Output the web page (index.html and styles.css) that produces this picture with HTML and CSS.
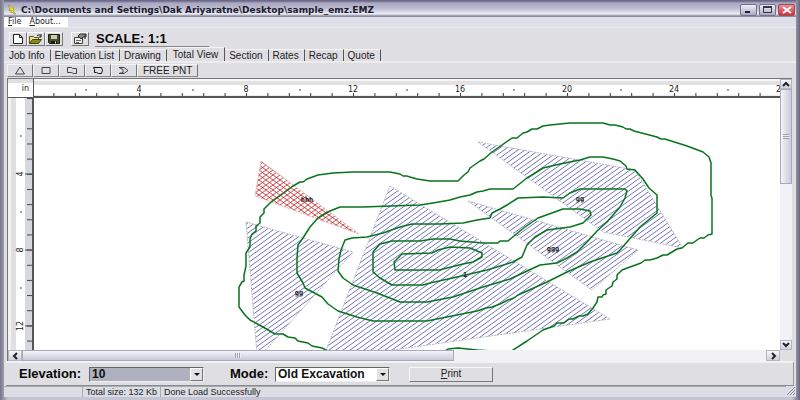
FILE: index.html
```html
<!DOCTYPE html>
<html lang="en">
<head>
<meta charset="utf-8">
<title>C:\Documents and Settings\Dak Ariyaratne\Desktop\sample_emz.EMZ</title>
<link rel="stylesheet" href="styles.css">
</head>
<body>
<div class="window">
  <header class="titlebar">
    <svg class="app-icon" width="10" height="10" viewBox="0 0 10 10" aria-hidden="true">
      <path d="M1 0L4 1L7 4L6 6L9 9L7 9L5 7L4 8L4 5L2 6L3 3Z" fill="#e6e01c" stroke="#8f8d22" stroke-width=".6"/>
    </svg>
    <h1 class="title">C:\Documents and Settings\Dak Ariyaratne\Desktop\sample_emz.EMZ</h1>
    <div class="window-controls">
      <button class="control" aria-label="Minimize"><svg width="14" height="10"><path d="M3 7h5" stroke="#223" stroke-width="2"/></svg></button>
      <button class="control" aria-label="Maximize"><svg width="14" height="10"><path d="M2.500 2.500h8v5h-8z" fill="none" stroke="#334"/><path d="M2 2h9" stroke="#334" stroke-width="2"/></svg></button>
      <button class="control close" aria-label="Close"><svg width="14" height="10"><path d="M3 2l8 6M11 2l-8 6" stroke="#fff" stroke-width="2"/></svg></button>
    </div>
  </header>

  <nav class="menubar">
    <button class="menu"><u>F</u>ile</button>
    <button class="menu"><u>A</u>bout...</button>
  </nav>

  <div class="toolbar">
    <button class="tool" aria-label="New"><svg width="16" height="12"><path d="M3.500 1.500h6l3 3v6h-9zM9.500 1.500v3h3" fill="#fff" stroke="#222"/></svg></button>
    <button class="tool" aria-label="Open"><svg width="16" height="12"><path d="M1.500 10.500v-7h4l1 1h4v2" fill="#e8e48a" stroke="#55551a"/><path d="M1.500 10.500l3-4h9l-3 4z" fill="#8a8a20" stroke="#44440c"/><path d="M9 2.500q3-2 4 1M13 1v3h-2" fill="none" stroke="#222"/></svg></button>
    <button class="tool" aria-label="Save"><svg width="16" height="12"><path d="M2.500 1.500h11v9h-10l-1-1z" fill="#4c5028" stroke="#1c1e12"/><path d="M5 2h6v4h-6z" fill="#c9cbb8"/><path d="M5 8h6v3h-6z" fill="#191919"/><path d="M9 8.500h1v2h-1z" fill="#ddd"/></svg></button>
    <button class="tool tool-apart" aria-label="Properties"><svg width="16" height="12"><path d="M2.500 4.500h8v6h-8z" fill="#eee" stroke="#444"/><path d="M4 7.500h5M4 9.500h3" stroke="#666"/><path d="M6 3l2-2h6v3h-3l-2 2z" fill="#888" stroke="#333"/><path d="M13 1v5" stroke="#333"/></svg></button>
    <output class="scale">SCALE: 1:1</output>
  </div>

  <div class="tabs" role="tablist">
    <button class="tab" role="tab">Job Info</button>
    <button class="tab" role="tab">Elevation List</button>
    <button class="tab" role="tab">Drawing</button>
    <button class="tab selected" role="tab" aria-selected="true">Total View</button>
    <button class="tab" role="tab">Section</button>
    <button class="tab" role="tab">Rates</button>
    <button class="tab" role="tab">Recap</button>
    <button class="tab" role="tab">Quote</button>
  </div>

  <div class="shapes">
    <button class="shape" aria-label="Triangle"><svg width="12" height="9"><path d="M6 1l4.500 7h-9z"/></svg></button>
    <button class="shape" aria-label="Rectangle"><svg width="12" height="9"><path d="M2 1.500h8v6h-8z"/></svg></button>
    <button class="shape" aria-label="Quadrilateral"><svg width="12" height="9"><path d="M1.500 1.500h4l1 1h4v5h-3l-2-1h-4z"/></svg></button>
    <button class="shape" aria-label="Polygon"><svg class="strong" width="12" height="9"><path d="M1.500 1.500h8l1 3-1 3h-3l-2-1h-2v-3z"/></svg></button>
    <button class="shape" aria-label="Open polygon"><svg width="12" height="9"><path d="M1 1.500h5l4 3-4 3h-5l4-1v-3z"/></svg></button>
    <button class="shape">FREE PNT</button>
  </div>

  <main class="viewport">
    <div class="corner">in</div>
    <svg class="ruler-x" aria-hidden="true">
      <defs>
        <pattern id="tick-x" width="21.400" height="17" patternUnits="userSpaceOnUse" x="19.400"><path d="M.5 12v4" stroke="#333"/></pattern>
      </defs>
      <rect width="100%" height="17" fill="url(#tick-x)"/>
      <g class="ruler-text">
        <text x="105" y="11">4</text><text x="212" y="11">8</text><text x="319" y="11">12</text><text x="426" y="11">16</text><text x="533" y="11">20</text><text x="640" y="11">24</text><text x="747" y="11">28</text>
      </g>
      <path class="major" d="M105.500 12v5M212.500 12v5M319.500 12v5M426.500 12v5M533.500 12v5M640.500 12v5"/>
      <path class="dots" d="M51 9h2M158 9h2M265 9h2M372 9h2M479 9h2M586 9h2M693 9h2"/>
    </svg>
    <svg class="ruler-y" aria-hidden="true">
      <defs>
        <pattern id="tick-y" width="24" height="15.160" patternUnits="userSpaceOnUse"><path d="M19 .5h5" stroke="#444"/></pattern>
      </defs>
      <rect width="24" height="100%" fill="url(#tick-y)"/>
      <g class="ruler-text">
        <text transform="translate(15 76) rotate(-90)">4</text><text transform="translate(15 152) rotate(-90)">8</text><text transform="translate(15 228) rotate(-90)">12</text>
      </g>
      <path class="major" d="M17 76h7M17 152h7M17 228h7"/>
      <path class="dots" d="M12 38h2M12 114h2M12 190h2"/>
    </svg>

    <svg class="plot" role="img" aria-label="Site contours with excavation areas">
      <defs>
        <pattern id="hatch" width="7" height="5" patternUnits="userSpaceOnUse"><path d="M-1 5.714L8 -.714M-1 .714L1 -.714M6 5.714L8 4.286" stroke="#6464b4" stroke-width=".9"/></pattern>
        <pattern id="cross" width="7" height="5" patternUnits="userSpaceOnUse"><path d="M0 5L7 0M0 0L7 5" stroke="#cf2c32" stroke-width=".9"/></pattern>
      </defs>
      <g transform="translate(-34 -98)">
        <g class="area">
          <path d="M246 222L353 252L262 354L257 354Z"/>
          <path d="M390 186L610 319L372 353L325 353Z"/>
          <path d="M478 142L635 170L683 248L603 232Z"/>
          <path d="M468 201L638 250L592 290Z"/>
        </g>
        <path class="area-cut" d="M261 161L255 196L359 234Z"/>
        <g class="contour">
          <path d="M328 351L322 348L312 346L308 343L298 341L295 338L288 337L283 334L275 334L263 327L250 320L245 315L239 307V287L242 282L244 281V275L246 266V253L250 247V239L252 234L256 231V226L260 223V217L264 213V209L270 203L285 192L293 186L300 182L303 182L307 179L318 175L333 173L353 172H390L400 174L403 176H407L410 177L417 179L430 181H458L464 175L468 172L470 168L480 161L484 159L492 152L512 138H517L523 133L527 132L532 129H537L543 126L550 125L560 124L570 123H603L610 125H615L623 127L626 129H630L634 131L657 137L661 139H665L687 146L703 152L709 157L711 163V196L712 198V234L708 235L704 238H700L697 240L693 243H688L682 248L677 249L667 255H663L657 258L650 260H645L641 263L630 267L622 270L617 275V279L613 282L612 286L606 290V294L603 295L602 297H598L597 302L593 308L588 314L583 316H579L573 319H569L564 323H557L554 326L543 330L527 341L510 352"/>
          <path d="M492 351L477 350L458 348L448 349L445 351"/>
          <path d="M303 238L310 227L318 218L330 211L340 207H363L390 206L420 205L433 203L450 200L460 197L470 195L477 192L483 191L490 189H513L527 178L532 175L543 168L560 164L580 160L590 157H603L613 159L620 161L626 166L627 169L635 170L643 179L649 188L657 195V213L640 227L627 242L620 250L617 253L605 257L590 262L567 272L547 282L527 291L518 295L514 298L508 300L500 304L492 307L486 308L477 311L447 317L427 321H373L357 317L338 311L328 304L322 297L305 288L303 283L297 273V258L298 245Z"/>
          <path d="M345 240L352 238L367 237L383 233L400 227L412 224H440L463 223L477 220L490 218L492 213L500 209L507 205L518 198L543 197L563 198L570 193L580 189H625L627 191L625 198L620 207L607 222L597 231L587 242L577 252L567 258L557 263L540 265L525 272L510 279L483 287L453 297L427 302H400L377 293L353 285L343 278L338 271L339 259L341 250Z"/>
          <path d="M392 241L380 244L373 252V272L380 278L392 285H423L430 283L457 277L487 270L513 262L522 257L527 245L535 237L547 230L570 227L583 223L591 215L590 211L580 209H563L538 218L525 227L520 231L508 241H500L498 243H483L460 241L450 239H433L420 241Z"/>
          <path d="M402 254L394 262L395 270H440L443 269L463 264L473 262L482 257V253L470 248L450 247L438 250L432 253Z"/>
        </g>
        <g class="area-label">
          <text x="307" y="202">hhh</text>
          <text x="299" y="295">gg</text>
          <text x="580" y="201">gg</text>
          <text x="553" y="251">ggg</text>
          <text x="465" y="277">1</text>
        </g>
      </g>
    </svg>

    <div class="scroll-y">
      <button class="arrow" aria-label="Scroll up"><svg width="10" height="8"><path d="M2 6l3-3 3 3"/></svg></button>
      <div class="track"><div class="thumb"><i class="grip"></i></div></div>
      <button class="arrow" aria-label="Scroll down"><svg width="10" height="8"><path d="M2 2l3 3 3-3"/></svg></button>
    </div>
    <div class="scroll-x">
      <button class="arrow" aria-label="Scroll left"><svg width="12" height="8"><path d="M8 1l-3 3 3 3"/></svg></button>
      <div class="track"><div class="thumb"><i class="grip"></i></div></div>
      <button class="arrow" aria-label="Scroll right"><svg width="12" height="8"><path d="M5 1l3 3-3 3"/></svg></button>
    </div>
    <div class="scroll-corner"></div>
  </main>

  <form class="options">
    <label class="option-label" for="elevation">Elevation:</label>
    <span class="combo active"><select id="elevation"><option>10</option></select><i class="drop"></i></span>
    <label class="option-label mode-label" for="mode">Mode:</label>
    <span class="combo"><select id="mode"><option>Old Excavation</option></select><i class="drop"></i></span>
    <button class="print" type="button"><u>P</u>rint</button>
  </form>

  <footer class="status">
    <span class="cell"></span>
    <span class="cell">Total size: 132 Kb</span>
    <span class="cell">Done Load Successfully</span>
    <svg class="resize" width="10" height="10" aria-hidden="true"><path d="M1 9l8-8M4 9l5-5M7 9l2-2" stroke="#8c8c96"/></svg>
  </footer>
</div>
</body>
</html>
```
FILE: styles.css
```css
* {
  box-sizing: border-box;
}

body {
  margin: 0;
  font: 10px/12px "Liberation Sans", Arial, sans-serif;
  color: #222;
}

button {
  margin: 0;
  padding: 0;
  border: 0;
  background: none;
  font: inherit;
  color: inherit;
}

svg {
  display: block;
}

.window {
  display: flex;
  flex-direction: column;
  height: 100vh;
  overflow: hidden;
  background: #dfdee2;
  border: solid #77768a;
  border-width: 0 4px 3px;
  border-image: linear-gradient(90deg, #77768a, #c4c4d4 1%, #c4c4d4 99%, #66657a) 4;
}

/* Title bar */

.titlebar {
  display: flex;
  flex: none;
  align-items: center;
  height: 17px;
  padding: 2px 1px 0 3px;
  background: linear-gradient(#6c6986 0 1px, #a9a8c2 3px, #b9b9d0 8px, #ededf5 14px, #8c8ca4 16px);
}

.title {
  flex: 1;
  margin: 0 0 0 4px;
  font: bold 9px/12px "DejaVu Sans", Verdana, sans-serif;
  color: #1c1b2b;
}

.window-controls {
  display: flex;
  gap: 2px;
}

.control {
  display: grid;
  place-items: center;
  width: 17px;
  height: 12px;
  border: 1px solid #71718d;
  border-radius: 2px;
  background: linear-gradient(#f0f0f8, #a9a9c4);
}

.close {
  border-color: #a34a58;
  background: linear-gradient(#ee8c90, #c8363e);
}

/* Menu */

.menubar {
  display: flex;
  flex: none;
  height: 11px;
  border-bottom: 1px solid #e9e9ee;
  background: linear-gradient(90deg, #fff 64px, #dedfe9 64px);
}

.menu {
  padding: 0 4px;
  font: 8px/10px "DejaVu Sans", Tahoma, sans-serif;
}

/* Toolbar */

.toolbar {
  display: flex;
  flex: none;
  align-items: center;
  height: 20px;
  padding: 2px 5px 1px;
}

.tool {
  display: grid;
  place-items: center;
  width: 18px;
  height: 14px;
  border: 1px solid;
  border-color: #fafafa #777 #777 #fafafa;
}

.tool-apart {
  margin-left: 8px;
}

.scale {
  width: 114px;
  margin-left: 6px;
  padding-left: 1px;
  border-bottom: 1px solid #888;
  font: bold 13px/15px "Liberation Sans", Arial, sans-serif;
  color: #080808;
}

/* Tabs */

.tabs {
  display: flex;
  flex: none;
  align-items: flex-end;
  height: 15px;
  padding-left: 1px;
  border-bottom: 2px solid #ececee;
}

.tab {
  height: 12px;
  padding: 0 5px 0 4px;
  border-top: 1px solid #f4f4f4;
  border-right: 1px solid #555;
  line-height: 12px;
}

.tab.selected {
  height: 14px;
  padding: 0 6px;
}

/* Shape tools */

.shapes {
  display: flex;
  flex: none;
  height: 15px;
  padding: 1px 3px;
}

.shape {
  display: grid;
  place-items: center;
  width: 26px;
  border: 1px solid;
  border-color: #f4f4f4 #777 #888 #f4f4f4;
}

.shape:last-child {
  width: auto;
  padding: 0 5px;
}

.shape svg {
  fill: none;
  stroke: #444;
}

.shape .strong {
  stroke: #111;
}

/* Drawing area */

.viewport {
  display: grid;
  flex: 1;
  grid-template: 19px minmax(0, 1fr) 11px / 26px minmax(0, 1fr) 12px;
  min-height: 0;
  margin: 0 4px 0 3px;
  border: solid #77777b;
  border-width: 1px 0 0 1px;
  background: #fff;
}

.corner {
  padding: 4px 4px 0 0;
  border-right: 1px solid #555;
  border-bottom: 1px solid #555;
  background: linear-gradient(#e0e0e2 4px, #fff 4px);
  font: 8px/12px "DejaVu Sans", Verdana, sans-serif;
  text-align: right;
}

.ruler-x {
  width: 100%;
  height: 19px;
  border-top: 2px solid #f6f6f6;
  border-bottom: 2px solid #555;
  background: linear-gradient(#e2e2e4 4px, #fff 4px, #fff 14px, #ddd 15px);
}

.ruler-y {
  width: 26px;
  height: 100%;
  border-right: 2px solid #555;
  background: linear-gradient(90deg, #f3f3ee 3px, #dfdfe3 3px, #dfdfe3 8px, #fff 8px, #fff 17px, #d7d7e1 17px);
}

.ruler-text {
  font: 8px "DejaVu Sans", Verdana, sans-serif;
  text-anchor: middle;
  fill: #222;
}

.major,
.dots {
  stroke: #444;
}

.plot {
  width: 100%;
  height: 100%;
}

.area {
  fill: url(#hatch);
  stroke: #b8b8c4;
  stroke-width: 1;
  stroke-dasharray: 2 1;
}

.area-cut {
  fill: url(#cross);
  stroke: #dcb4b4;
  stroke-dasharray: 2 1;
}

.contour {
  fill: none;
  stroke: #08731c;
  stroke-width: 1.5px;
  stroke-linejoin: round;
}

.area-label {
  font: bold 7px "DejaVu Sans Mono", monospace;
  text-anchor: middle;
  fill: #222;
}

/* Scroll bars */

.scroll-y {
  display: flex;
  flex-direction: column;
  grid-area: 1 / 3 / 3 / 4;
}

.scroll-x {
  display: flex;
  grid-area: 3 / 1 / 4 / 3;
}

.arrow {
  display: grid;
  flex: none;
  place-items: center;
  width: 12px;
  height: 10px;
  border: 1px solid #b4b4c2;
  background: linear-gradient(#f8f8fc, #cfcfdd);
}

.scroll-x .arrow {
  width: 14px;
  height: 11px;
}

.arrow path {
  fill: none;
  stroke: #222;
  stroke-width: 2;
}

.track {
  flex: 1;
  background: #f1f1f6;
}

.thumb {
  display: grid;
  place-items: center;
  border: 1px solid #a9a9ba;
}

.scroll-y .thumb {
  height: 38%;
  background: linear-gradient(90deg, #f4f4fa, #c9c9da);
}

.scroll-x .thumb {
  width: 58%;
  height: 11px;
  background: linear-gradient(#f4f4fa, #c9c9da);
}

.grip {
  width: 6px;
  height: 5px;
  background: repeating-linear-gradient(90deg, #a0a0b4 0 1px, #eee 1px 2px);
}

.scroll-y .grip {
  background: repeating-linear-gradient(#a0a0b4 0 1px, #eee 1px 2px);
}

.scroll-corner {
  background: #dfdee2;
}

/* Options */

.options {
  display: flex;
  flex: none;
  align-items: center;
  height: 25px;
  margin: 0 2px;
  padding-left: 13px;
  border: solid;
  border-width: 2px 1px 1px 0;
  border-color: #f2f2f2 #999 #8a8a8a;
}

.option-label {
  width: 70px;
  font: bold 13px/14px "Liberation Sans", Arial, sans-serif;
  color: #080808;
}

.mode-label {
  width: 45px;
  margin-left: 26px;
}

.combo {
  display: grid;
  grid-template-columns: 1fr 13px;
  width: 115px;
  height: 15px;
  border: 1px solid;
  border-color: #666 #eee #eee #666;
  background: #fff;
}

.combo.active {
  background: #aeb0be;
}

.combo select {
  grid-area: 1 / 1 / 2 / 3;
  width: 100%;
  height: 13px;
  padding: 0 14px 0 2px;
  border: 0;
  appearance: none;
  background: none;
  font: bold 12px/13px "Liberation Sans", Arial, sans-serif;
  color: #111;
}

.drop {
  display: grid;
  grid-area: 1 / 2;
  place-items: center;
  border: 1px solid;
  border-color: #fff #777 #777 #fff;
  background: #e2e2e5;
  pointer-events: none;
}

.drop::after {
  content: "";
  border: solid transparent;
  border-width: 3px 3px 0;
  border-top-color: #111;
}

.print {
  width: 84px;
  height: 15px;
  margin-left: 19px;
  border: 1px solid;
  border-color: #f8f8f8 #777 #777 #f8f8f8;
}

/* Status bar */

.status {
  display: grid;
  flex: none;
  grid-template-columns: 78px 78px 1fr 10px;
  height: 11px;
  background: #dcdce4;
}

.cell {
  padding-left: 3px;
  border: solid #aaaab2;
  border-width: 1px 0 0 1px;
  font-size: 9px;
  line-height: 11px;
  white-space: nowrap;
}

.cell:first-child {
  border-left: 0;
}
```
